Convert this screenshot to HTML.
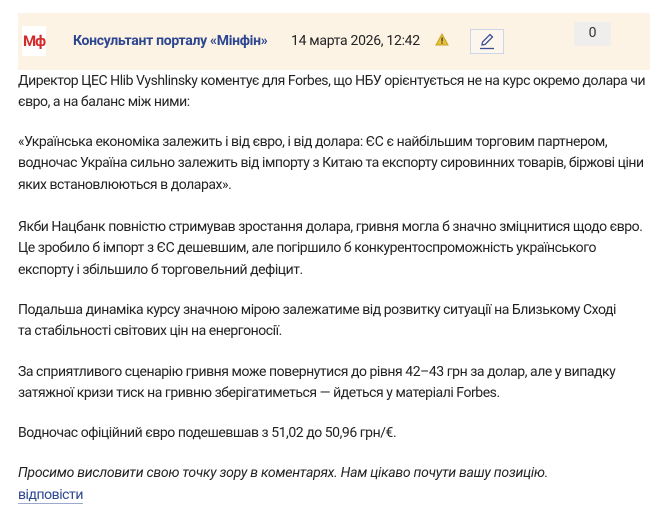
<!DOCTYPE html>
<html><head><meta charset="utf-8"><style>
body{margin:0;width:661px;height:512px;background:#fff;font-family:"Roboto","Liberation Sans",sans-serif;color:#222;overflow:hidden;position:relative}
.hdr{position:absolute;left:18px;top:13px;width:632px;height:57px;background:#fcf3e5}
.logo{position:absolute;left:22px;top:26px;width:24px;height:30px;background:#fff;color:#d42a2a;font-weight:bold;font-size:15px;line-height:30px;text-align:center;letter-spacing:-1px}
.name{position:absolute;left:73px;top:33px;font-size:14px;font-weight:bold;color:#2d4690;letter-spacing:-0.3px}
.date{position:absolute;left:291px;top:33px;font-size:14px;color:#222;letter-spacing:-0.3px}
.warn{position:absolute;left:435px;top:33px}
.edit{position:absolute;left:470px;top:29px;width:34px;height:25px;border:1px solid #cdd6e8;background:#fdf6ec;box-sizing:border-box}
.cnt{position:absolute;left:574px;top:22px;width:37px;height:24px;background:#f0eeec;font-size:14px;text-align:center;line-height:22px;color:#333}
.l{position:absolute;left:18px;font-size:14px;white-space:nowrap;letter-spacing:-0.45px}
a{color:#2d4690;text-decoration:none;border-bottom:1px solid #9aa8cc}
</style></head><body>
<div class="hdr"></div>
<div class="logo">Мф</div>
<div class="name">Консультант порталу «Мінфін»</div>
<div class="date">14 марта 2026, 12:42</div>
<svg class="warn" width="14" height="13" viewBox="0 0 14 13"><path d="M7 1L13 12H1Z" fill="#e6c23a" stroke="#c9a21d" stroke-width="1"/><rect x="6.4" y="4.5" width="1.3" height="4" fill="#333"/><rect x="6.4" y="9.3" width="1.3" height="1.3" fill="#333"/></svg>
<div class="edit"><svg width="34" height="25" viewBox="0 0 34 25" style="position:absolute;left:-1px;top:-1px"><path d="M12 16L12.5 13L20 5.5L22.5 8L15 15.5Z" fill="none" stroke="#3b4f9a" stroke-width="1.3"/><path d="M10 19.5H24" stroke="#3b4f9a" stroke-width="1.3"/></svg></div>
<div class="cnt">0</div>
<div class="l" style="top:73px">Директор ЦЕС Hlib Vyshlinsky коментує для Forbes, що НБУ орієнтується не на курс окремо долара чи</div>
<div class="l" style="top:94px">євро, а на баланс між ними:</div>
<div class="l" style="top:134px">«Українська економіка залежить і від євро, і від долара: ЄС є найбільшим торговим партнером,</div>
<div class="l" style="top:155px">водночас Україна сильно залежить від імпорту з Китаю та експорту сировинних товарів, біржові ціни</div>
<div class="l" style="top:177px">яких встановлюються в доларах».</div>
<div class="l" style="top:219px">Якби Нацбанк повністю стримував зростання долара, гривня могла б значно зміцнитися щодо євро.</div>
<div class="l" style="top:240px">Це зробило б імпорт з ЄС дешевшим, але погіршило б конкурентоспроможність українського</div>
<div class="l" style="top:262px">експорту і збільшило б торговельний дефіцит.</div>
<div class="l" style="top:302px">Подальша динаміка курсу значною мірою залежатиме від розвитку ситуації на Близькому Сході</div>
<div class="l" style="top:323px">та стабільності світових цін на енергоносії.</div>
<div class="l" style="top:364px">За сприятливого сценарію гривня може повернутися до рівня 42–43 грн за долар, але у випадку</div>
<div class="l" style="top:385px">затяжної кризи тиск на гривню зберігатиметься — йдеться у матеріалі Forbes.</div>
<div class="l" style="top:425px">Водночас офіційний євро подешевшав з 51,02 до 50,96 грн/€.</div>
<div class="l" style="top:465px;font-style:italic;letter-spacing:-0.25px">Просимо висловити свою точку зору в коментарях. Нам цікаво почути вашу позицію.</div>
<div class="l" style="top:487px"><a>відповісти</a></div>
</body></html>
